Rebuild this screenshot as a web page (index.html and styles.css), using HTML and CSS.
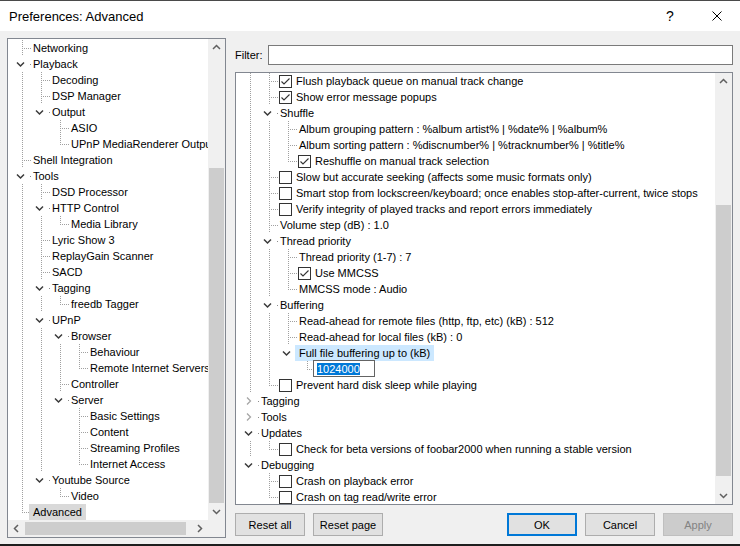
FILE: index.html
```html
<!DOCTYPE html>
<html lang="en">
<head>
    <meta charset="UTF-8">
    <title>Preferences: Advanced</title>
    <link rel="stylesheet" href="styles.css">
</head>
<body>
    <div class="window">
        <div class="titlebar">
            <span class="title">Preferences: Advanced</span>
            <span class="help">?</span>
            <span class="close">
                <svg width="10" height="10" viewBox="0 0 10 10"><path d="M0.5 0.5L9.5 9.5M9.5 0.5L0.5 9.5" stroke="#000" stroke-width="1" fill="none"/></svg>
            </span>
        </div>
        <div class="content">
            <div class="pane pages">
                <div class="view"><div class="tree" id="pages"></div></div>
                <div class="vscroll">
                    <span class="arrow"><svg width="17" height="17"><polyline points="5,10 8.5,6.5 12,10" stroke="#606060" stroke-width="1.5" fill="none"/></svg></span>
                    <div class="track"><div class="thumb"></div></div>
                    <span class="arrow"><svg width="17" height="17"><polyline points="5,7 8.5,10.5 12,7" stroke="#606060" stroke-width="1.5" fill="none"/></svg></span>
                </div>
                <div class="hscroll">
                    <span class="arrow"><svg width="17" height="17"><polyline points="10,5 6.5,8.5 10,12" stroke="#606060" stroke-width="1.5" fill="none"/></svg></span>
                    <div class="track"><div class="thumb"></div></div>
                    <span class="arrow"><svg width="17" height="17"><polyline points="7,5 10.5,8.5 7,12" stroke="#606060" stroke-width="1.5" fill="none"/></svg></span>
                </div>
                <div class="corner"></div>
            </div>
            <div class="side">
                <div class="filter-row">
                    <span class="filter-label">Filter:</span>
                    <div class="filter-input"></div>
                </div>
                <div class="pane settings">
                    <div class="view"><div class="tree" id="settings"></div></div>
                    <div class="vscroll">
                        <span class="arrow"><svg width="17" height="17"><polyline points="5,10 8.5,6.5 12,10" stroke="#606060" stroke-width="1.5" fill="none"/></svg></span>
                        <div class="track"><div class="thumb"></div></div>
                        <span class="arrow"><svg width="17" height="17"><polyline points="5,7 8.5,10.5 12,7" stroke="#606060" stroke-width="1.5" fill="none"/></svg></span>
                    </div>
                </div>
                <div class="buttons">
                    <span class="btn">Reset all</span>
                    <span class="btn">Reset page</span>
                    <span class="spacer"></span>
                    <span class="btn default">OK</span>
                    <span class="btn">Cancel</span>
                    <span class="btn disabled">Apply</span>
                </div>
            </div>
        </div>
    </div>
    <script>
        // level, kind, text
        // t text, c checkbox, k checked, e expanded, x collapsed, s expanded+selected, d selected (inactive), i edit
        var pages = [
            [0,'t','Networking'],
            [0,'e','Playback'],
            [1,'t','Decoding'],
            [1,'t','DSP Manager'],
            [1,'e','Output'],
            [2,'t','ASIO'],
            [2,'t','UPnP MediaRenderer Output'],
            [0,'t','Shell Integration'],
            [0,'e','Tools'],
            [1,'t','DSD Processor'],
            [1,'e','HTTP Control'],
            [2,'t','Media Library'],
            [1,'t','Lyric Show 3'],
            [1,'t','ReplayGain Scanner'],
            [1,'t','SACD'],
            [1,'e','Tagging'],
            [2,'t','freedb Tagger'],
            [1,'e','UPnP'],
            [2,'e','Browser'],
            [3,'t','Behaviour'],
            [3,'t','Remote Internet Servers'],
            [2,'t','Controller'],
            [2,'e','Server'],
            [3,'t','Basic Settings'],
            [3,'t','Content'],
            [3,'t','Streaming Profiles'],
            [3,'t','Internet Access'],
            [1,'e','Youtube Source'],
            [2,'t','Video'],
            [0,'d','Advanced']
        ];

        var settings = [
            [1,'k','Flush playback queue on manual track change'],
            [1,'k','Show error message popups'],
            [1,'e','Shuffle'],
            [2,'t','Album grouping pattern : %album artist% | %date% | %album%'],
            [2,'t','Album sorting pattern : %discnumber% | %tracknumber% | %title%'],
            [2,'k','Reshuffle on manual track selection'],
            [1,'c','Slow but accurate seeking (affects some music formats only)'],
            [1,'c','Smart stop from lockscreen/keyboard; once enables stop-after-current, twice stops'],
            [1,'c','Verify integrity of played tracks and report errors immediately'],
            [1,'t','Volume step (dB) : 1.0'],
            [1,'e','Thread priority'],
            [2,'t','Thread priority (1-7) : 7'],
            [2,'k','Use MMCSS'],
            [2,'t','MMCSS mode : Audio'],
            [1,'e','Buffering'],
            [2,'t','Read-ahead for remote files (http, ftp, etc) (kB) : 512'],
            [2,'t','Read-ahead for local files (kB) : 0'],
            [2,'s','Full file buffering up to (kB)'],
            [3,'i','1024000'],
            [1,'c','Prevent hard disk sleep while playing'],
            [0,'x','Tagging'],
            [0,'x','Tools'],
            [0,'e','Updates'],
            [1,'c','Check for beta versions of foobar2000 when running a stable version'],
            [0,'e','Debugging'],
            [1,'c','Crash on playback error'],
            [1,'c','Crash on tag read/write error']
        ];

        var openIcon = '<svg width="19" height="16"><polyline points="4,6.5 7.5,10 11,6.5" stroke="#3a3a3a" stroke-width="1.5" fill="none"/><rect x="17" y="8" width="1" height="1" fill="#8c8c8c"/></svg>';
        var closedIcon = '<svg width="19" height="16"><polyline points="6,4.5 9.5,8 6,11.5" stroke="#a6a6a6" stroke-width="1.3" fill="none"/><rect x="17" y="8" width="1" height="1" fill="#8c8c8c"/></svg>';
        var tick = '<svg width="11" height="11"><polyline points="1.5,5.5 4,8 9.5,2.5" stroke="#333" stroke-width="1.1" fill="none"/></svg>';

        function hasNext(items, i, lv){
            for(var j=i+1;j<items.length;j++){
                if(items[j][0]<lv) return false;
                if(items[j][0]==lv) return true;
            }
            return false;
        }

        function build(id, items){
            var tree = document.getElementById(id);
            for(var i=0;i<items.length;i++){
                var lv=items[i][0], kind=items[i][1], text=items[i][2];
                var row = document.createElement('div');
                row.className = 'row';

                for(var a=0;a<=lv;a++){
                    var cell = document.createElement('span');
                    var more = hasNext(items, i, a);
                    if(a<lv){
                        cell.className = more ? 'cell pipe' : 'cell';
                    }else if(kind=='e'||kind=='s'){
                        cell.className = 'cell';
                        cell.innerHTML = openIcon;
                    }else if(kind=='x'){
                        cell.className = 'cell';
                        cell.innerHTML = closedIcon;
                    }else{
                        cell.className = more ? 'cell tee' : 'cell ell';
                    }
                    row.appendChild(cell);
                }

                if(kind=='c'||kind=='k'){
                    var box = document.createElement('span');
                    box.className = 'check';
                    if(kind=='k') box.innerHTML = tick;
                    row.appendChild(box);
                }

                var label = document.createElement('span');
                if(kind=='i'){
                    label.className = 'edit';
                    label.innerHTML = '<span class="picked">'+text+'</span>';
                }else{
                    label.className = 'label';
                    if(kind=='s') label.className += ' sel';
                    if(kind=='d') label.className += ' dim';
                    label.textContent = text;
                }
                row.appendChild(label);
                tree.appendChild(row);
            }
        }

        build('pages', pages);
        build('settings', settings);
    </script>
</body>
</html>
```

FILE: styles.css
```css
* {box-sizing: border-box;}
html, body {margin: 0; padding: 0;}
body {width: 740px; height: 546px; overflow: hidden; background: #1e1e1e; font: 11px "Liberation Sans", Arial, sans-serif; color: #000;}

.window {width: 740px; height: 544px; background: #f0f0f0; border-top: 1px solid #4a4a4a; display: flex; flex-direction: column;}
.titlebar {height: 30px; flex: none; background: #fff; display: flex; align-items: center; padding-left: 9px;}
.title {flex: 1; font-size: 13px; color: #000;}
.help {width: 46px; text-align: center; font-size: 14px;}
.close {width: 47px; display: flex; justify-content: center; align-items: center;}

.content {flex: 1; display: flex; gap: 9px; padding: 7px 7px 0 7px;}

.pane {background: #fff; border: 1px solid #828790; display: grid;}
.pages {width: 219px; height: 500px; grid-template-columns: 200px 17px; grid-template-rows: 481px 17px;}
.settings {height: 433px; grid-template-columns: 1fr 17px; margin-bottom: 8px;}

.view {overflow: hidden; padding-left: 5px;}
.pages .view {padding-top: 1px;}
.tree {white-space: nowrap;}

.row {display: flex; height: 16px; line-height: 16px; align-items: center;}
.cell {width: 19px; height: 16px; flex: none; display: block;}
.cell svg {display: block;}
.pipe {background-image: repeating-linear-gradient(to bottom, #a0a0a0 0 1px, transparent 1px 2px); background-size: 1px 16px; background-position: 9px 0; background-repeat: no-repeat;}
.tee, .ell {background-image: repeating-linear-gradient(to bottom, #a0a0a0 0 1px, transparent 1px 2px), repeating-linear-gradient(to right, #a0a0a0 0 1px, transparent 1px 2px); background-position: 9px 0, 11px 8px; background-repeat: no-repeat;}
.tee {background-size: 1px 16px, 8px 1px;}
.ell {background-size: 1px 9px, 8px 1px;}

.label {padding-left: 1px; height: 16px;}
.sel {background: #cce8ff; margin-left: -3px; padding: 0 4px;}
.dim {background: #d9d9d9; margin-left: -3px; padding: 0 4px;}

.check {width: 13px; height: 13px; border: 1px solid #333; background: #fff; margin-right: 3px; flex: none;}
.check svg {display: block;}

.edit {align-self: flex-start; margin: -1px 0 0 -4px; width: 62px; height: 17px; border: 1px solid #646464; background: #fff; padding-left: 3px; display: flex; align-items: center;}
.picked {background: #0078d7; color: #fff; line-height: 12px;}

.vscroll {background: #f0f0f0; display: flex; flex-direction: column;}
.hscroll {background: #f0f0f0; display: flex;}
.arrow {width: 17px; height: 17px; flex: none;}
.arrow svg {display: block;}
.track {flex: 1;}
.vscroll .thumb {background: #cdcdcd; margin: 0 1px;}
.hscroll .thumb {background: #cdcdcd; margin: 2px 0 1px 0; width: 161px; height: 13px;}
.pages .vscroll .thumb {margin-top: 112px; height: 335px;}
.settings .vscroll .thumb {margin-top: 115px; height: 271px;}
.corner {background: #f0f0f0;}

.side {width: 498px; padding-top: 7px; display: flex; flex-direction: column;}
.filter-row {display: flex; align-items: center; height: 20px; margin-bottom: 7px;}
.filter-label {width: 33px;}
.filter-input {flex: 1; height: 20px; border: 1px solid #7a7a7a; background: #fff;}

.buttons {display: flex; gap: 8px;}
.spacer {flex: 1;}
.btn {width: 70px; height: 23px; border: 1px solid #adadad; background: #e1e1e1; display: flex; align-items: center; justify-content: center;}
.btn.default {border: 2px solid #0078d7;}
.btn.disabled {background: #cccccc; border-color: #bfbfbf; color: #838383;}
```
